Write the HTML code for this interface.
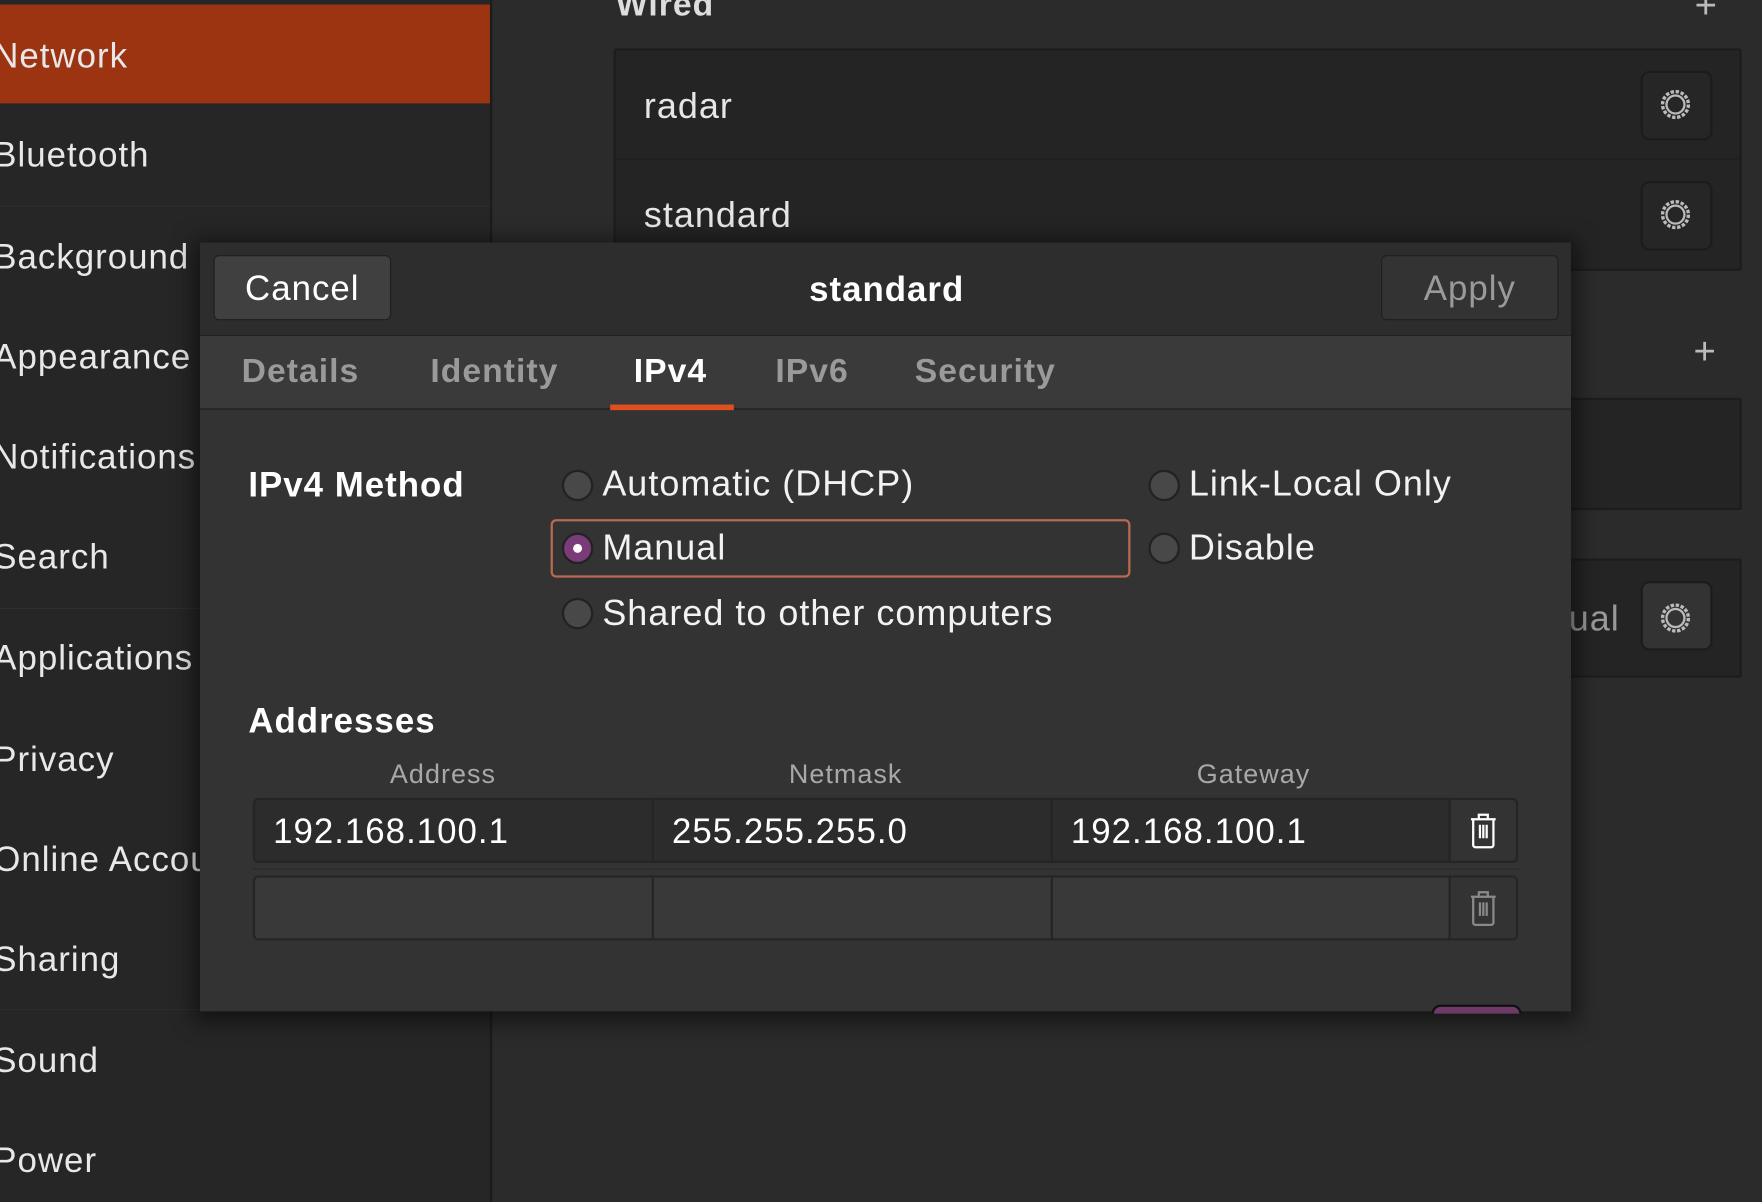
<!DOCTYPE html><html><head><style>
html,body{margin:0;padding:0;width:1762px;height:1202px;overflow:hidden;background:#2b2b2b}
#w{position:absolute;left:0;top:0;width:1568px;height:1070px;transform:scale(1.12372);transform-origin:0 0;font-family:"Liberation Sans","DejaVu Sans",sans-serif;color:#fff;letter-spacing:0.9px}
.a{position:absolute}
.side{left:0;top:0;width:436px;height:1070px;background:#262626;border-right:2px solid #1c1c1c}
.si{position:absolute;left:-6px;font-size:31px;color:#e8e8e8;white-space:nowrap;margin-top:2px}
.sep{position:absolute;left:0;width:436px;height:1px;background:#2e2e2e}
.box{background:#242424;border:2px solid #1d1d1d;border-radius:2px}
.gear{position:absolute;width:60px;height:58px;border:2px solid #1c1c1c;border-radius:8px;background:#262626}
.dlg{left:178px;top:216px;width:1220px;height:684px;background:#333;box-shadow:0 4px 18px 6px rgba(0,0,0,.5)}
.btn{position:absolute;border:1px solid #1e1e1e;border-radius:5px;background:#404040;font-size:31px;text-align:center;line-height:58px;height:56px}
.tab{position:absolute;top:314px;font-size:30px;font-weight:bold;color:#9a9a9a}
.radio{position:absolute;width:24px;height:24px;border-radius:50%;background:#484848;border:2px solid #222}
.lbl{position:absolute;font-size:32px;color:#f2f2f2;white-space:nowrap;margin-top:2px}
.cell{position:absolute;height:58px;border:2px solid #252525;font-size:31px;line-height:56px;padding-left:16px;box-sizing:border-box}
.hd{position:absolute;top:676px;font-size:24px;color:#a8a8a8}
</style></head><body><div id="w">
<div class="a side">
<div class="a" style="left:0;top:4px;width:436px;height:88px;background:#9c3311"></div>
<div class="si" style="top:30px">Network</div>
<div class="si" style="top:118px">Bluetooth</div>
<div class="sep" style="top:183px"></div>
<div class="si" style="top:209px">Background</div>
<div class="si" style="top:298px">Appearance</div>
<div class="si" style="top:387px">Notifications</div>
<div class="si" style="top:476px">Search</div>
<div class="sep" style="top:541px"></div>
<div class="si" style="top:566px">Applications</div>
<div class="si" style="top:656px">Privacy</div>
<div class="si" style="top:745px">Online Accounts</div>
<div class="si" style="top:834px">Sharing</div>
<div class="sep" style="top:898px"></div>
<div class="si" style="top:924px">Sound</div>
<div class="si" style="top:1013px">Power</div>
</div>
<div class="a" style="left:548px;top:-12px;font-size:30px;font-weight:bold;color:#ddd">Wired</div>
<div class="a" style="left:1508px;top:-14px;font-size:34px;color:#bbb">+</div>
<div class="a box" style="left:546px;top:43px;width:1000px;height:194px"></div>
<div class="a" style="left:548px;top:141px;width:1000px;height:1px;background:#1e1e1e"></div>
<div class="a" style="left:573px;top:76px;font-size:32px;color:#e6e6e6">radar</div>
<div class="a" style="left:573px;top:173px;font-size:32px;color:#e6e6e6">standard</div>
<div class="gear" style="left:1460px;top:63px"></div>
<svg class="a" style="left:1476px;top:78px" width="30" height="30" viewBox="0 0 30 30" fill="none" stroke="#bbb"><circle cx="15" cy="15" r="11.5" stroke-width="3" stroke-dasharray="3 1.5"/><circle cx="15" cy="15" r="8" stroke-width="2"/></svg>
<div class="gear" style="left:1460px;top:161px"></div>
<svg class="a" style="left:1476px;top:176px" width="30" height="30" viewBox="0 0 30 30" fill="none" stroke="#bbb"><circle cx="15" cy="15" r="11.5" stroke-width="3" stroke-dasharray="3 1.5"/><circle cx="15" cy="15" r="8" stroke-width="2"/></svg>
<div class="a" style="left:1507px;top:294px;font-size:34px;color:#bbb">+</div>
<div class="a box" style="left:1380px;top:354px;width:166px;height:96px"></div>
<div class="a box" style="left:1380px;top:497px;width:166px;height:102px"></div>
<div class="a" style="left:1396px;top:532px;font-size:32px;color:#999">ual</div>
<div class="gear" style="left:1460px;top:517px;background:#333"></div>
<svg class="a" style="left:1476px;top:535px" width="30" height="30" viewBox="0 0 30 30" fill="none" stroke="#bbb"><circle cx="15" cy="15" r="11.5" stroke-width="3" stroke-dasharray="3 1.5"/><circle cx="15" cy="15" r="8" stroke-width="2"/></svg>

<div class="a dlg">
<div class="a" style="left:0;top:0;width:1220px;height:82px;background:#2d2d2d;border-bottom:1px solid #222"></div>
<div class="a" style="left:0;top:83px;width:1220px;height:64px;background:#3a3a3a;border-bottom:2px solid #282828"></div>
</div>
<div class="btn" style="left:190px;top:227px;width:156px">Cancel</div>
<div class="btn" style="left:1229px;top:227px;width:156px;color:#9a9a9a;background:#333">Apply</div>
<div class="a" style="left:720px;top:240px;font-size:31px;font-weight:bold">standard</div>
<div class="tab" style="left:215px">Details</div>
<div class="tab" style="left:383px">Identity</div>
<div class="tab" style="left:564px;color:#fff">IPv4</div>
<div class="a" style="left:543px;top:360px;width:110px;height:5px;background:#e0501e"></div>
<div class="tab" style="left:690px">IPv6</div>
<div class="tab" style="left:814px">Security</div>
<div class="a" style="left:221px;top:414px;font-size:31px;font-weight:bold">IPv4 Method</div>
<div class="radio" style="left:500px;top:418px"></div><div class="lbl" style="left:536px;top:410px">Automatic (DHCP)</div>
<div class="a" style="left:490px;top:462px;width:512px;height:48px;border:2px solid #b86a50;border-radius:5px"></div>
<div class="radio" style="left:500px;top:474px;background:#7a3c78"></div><div class="a" style="left:510px;top:484px;width:8px;height:8px;border-radius:50%;background:#fff"></div>
<div class="lbl" style="left:536px;top:467px">Manual</div>
<div class="radio" style="left:500px;top:532px"></div><div class="lbl" style="left:536px;top:525px">Shared to other computers</div>
<div class="radio" style="left:1022px;top:418px"></div><div class="lbl" style="left:1058px;top:410px">Link-Local Only</div>
<div class="radio" style="left:1022px;top:474px"></div><div class="lbl" style="left:1058px;top:467px">Disable</div>
<div class="a" style="left:221px;top:624px;font-size:31px;font-weight:bold">Addresses</div>
<div class="hd" style="left:347px">Address</div>
<div class="hd" style="left:702px">Netmask</div>
<div class="hd" style="left:1065px">Gateway</div>
<div class="cell" style="left:225px;top:710px;width:357px;background:#2c2c2c;border-radius:5px 0 0 5px">192.168.100.1</div>
<div class="cell" style="left:580px;top:710px;width:357px;background:#2c2c2c">255.255.255.0</div>
<div class="cell" style="left:935px;top:710px;width:356px;background:#2c2c2c">192.168.100.1</div>
<div class="cell" style="left:1289px;top:710px;width:62px;background:#333;border-radius:0 5px 5px 0"></div>
<div class="a" style="left:225px;top:773px;width:1128px;height:1px;background:#2a2a2a"></div>
<div class="cell" style="left:225px;top:779px;width:357px;background:#393939;border-radius:5px 0 0 5px"></div>
<div class="cell" style="left:580px;top:779px;width:357px;background:#393939"></div>
<div class="cell" style="left:935px;top:779px;width:356px;background:#393939"></div>
<div class="cell" style="left:1289px;top:779px;width:62px;background:#333;border-radius:0 5px 5px 0"></div>
<svg class="a" style="left:1306px;top:722px" width="28" height="34" viewBox="0 0 28 34" fill="none" stroke="#fff" stroke-width="2"><path d="M3 7h22M10 7V3h8v4M5 8v22a2 2 0 0 0 2 2h14a2 2 0 0 0 2-2V8M11 12v12M14 12v12M17 12v12"/></svg>
<svg class="a" style="left:1306px;top:791px" width="28" height="34" viewBox="0 0 28 34" fill="none" stroke="#8a8a8a" stroke-width="2"><path d="M3 7h22M10 7V3h8v4M5 8v22a2 2 0 0 0 2 2h14a2 2 0 0 0 2-2V8M11 12v12M14 12v12M17 12v12"/></svg>
<div class="a" style="left:1274px;top:894px;width:76px;height:6px;border-radius:12px 12px 0 0;background:#6e3a68;border:2px solid #111;border-bottom:none"></div>
</div></body></html>
